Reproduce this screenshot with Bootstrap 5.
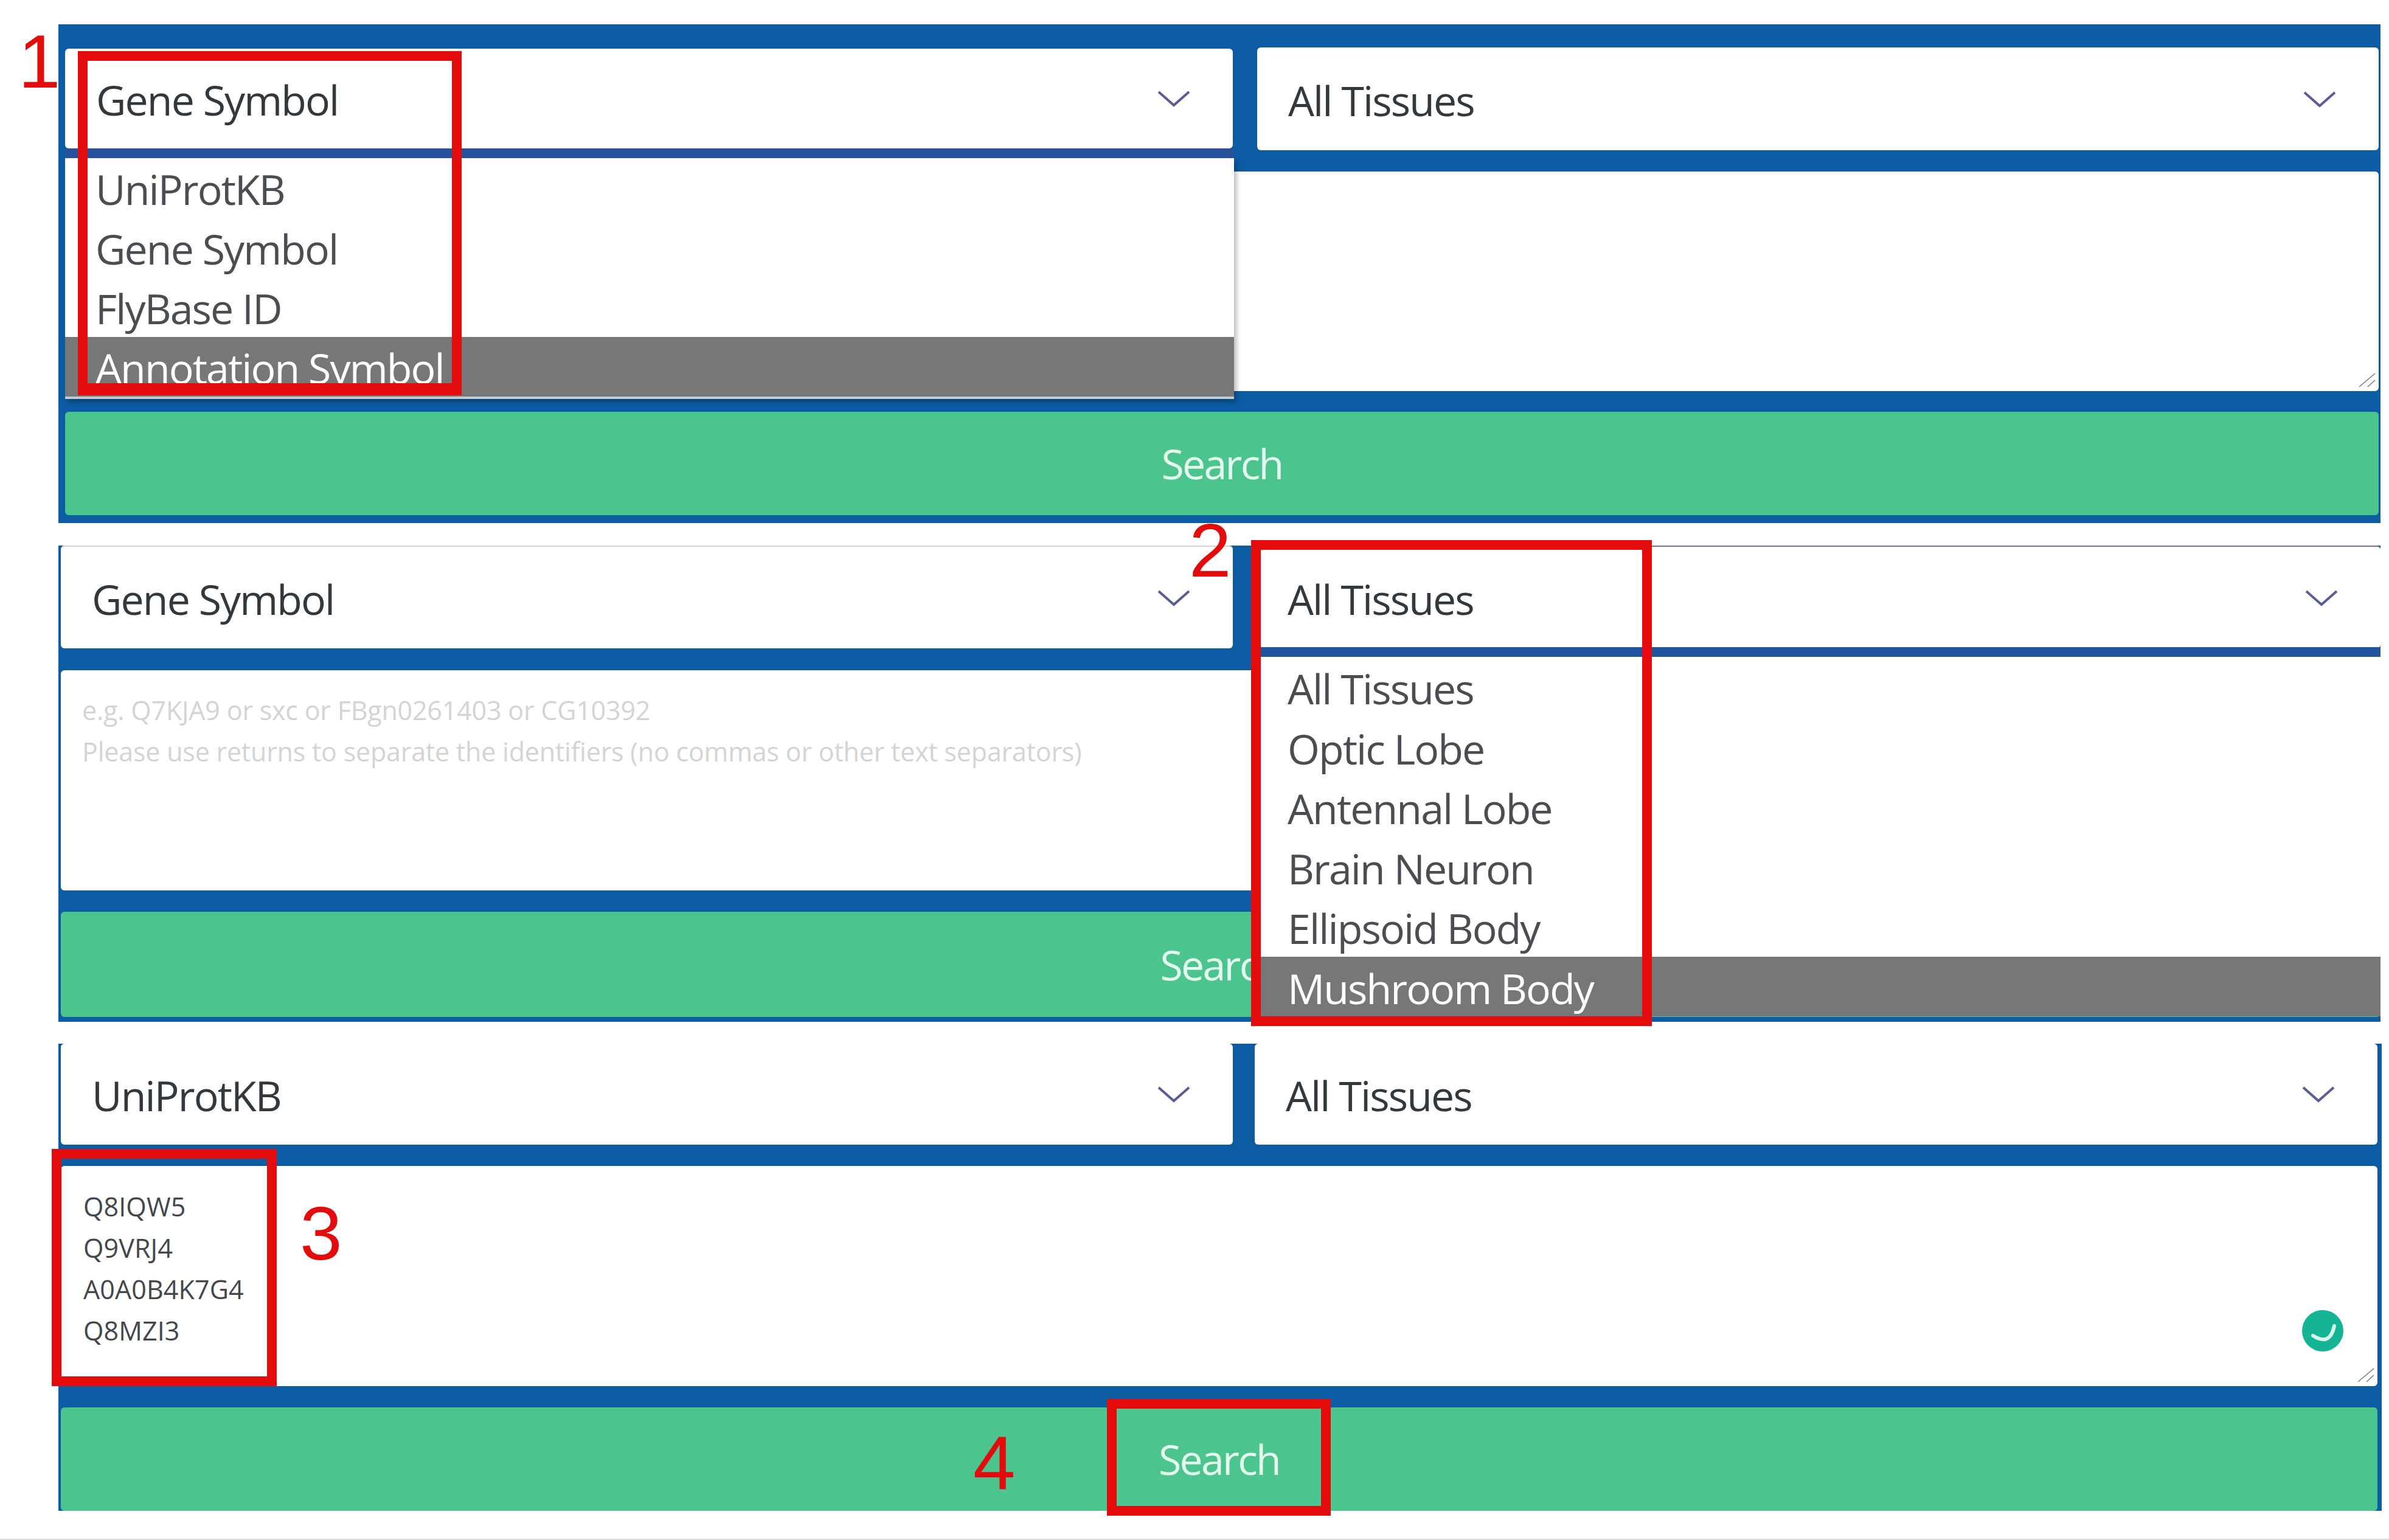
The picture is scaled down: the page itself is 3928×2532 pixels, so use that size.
<!DOCTYPE html>
<html lang="en">
<head>
  <meta charset="UTF-8" />
  <meta name="viewport" content="width=device-width, initial-scale=1.0"/>
  <title>Search steps</title>
  <link href="https://cdn.jsdelivr.net/npm/bootstrap@5.3.3/dist/css/bootstrap.min.css" rel="stylesheet" />
  <style>
    html, body { margin: 0; background: #fff; }
    .shot { position: relative; width: 3928px; height: 2532px; padding: 40px 12px 0 96px; border-bottom: 2px solid #dcdcdc; overflow: hidden; font-family: "Open Sans", "Liberation Sans", sans-serif; }

    .blue-panel { position: relative; background: #0b5ca3; }
    .panel-one { padding: 38px 3px 13px 11px; margin-bottom: 37px; width: 3818px; }
    .panel-two { padding: 0 0 8px 4px; margin-bottom: 36px; width: 3818px; }
    .panel-three { padding: 0 7px 0 4px; width: 3820px; }

    .select-row { gap: 40px; margin-bottom: 35px; }
    .panel-two .select-row { gap: 45px; margin-bottom: 36px; }
    .panel-three .select-row { gap: 36px; margin-bottom: 35px; }

    .blue-panel .form-select {
      height: 169px; padding: 4px 140px 0 51px; border: 0; border-radius: 6px;
      font-size: 68px; line-height: 1.4; color: #33383d; letter-spacing: -1.9px;
      background-color: #fff;
      background-image: url("data:image/svg+xml,%3csvg xmlns='http://www.w3.org/2000/svg' viewBox='0 0 54 28'%3e%3cpath fill='none' stroke='%235b5b98' stroke-width='4' d='M2 3l25 22L52 3'/%3e%3c/svg%3e");
      background-size: 54px 28px; background-position: right 70px center;
    }
    .blue-panel .left-select { flex: 0 0 1920px; width: 1920px; }
    .panel-one .left-select { height: 164px; margin-top: 2px; }
    .panel-two .left-select, .panel-three .left-select { flex-basis: 1927px; width: 1927px; }
    .panel-two .left-select { border-top: 2px solid #d4d4d4; }
    .panel-two .right-select { border-top: 2px solid #6f7590; padding-left: 45px; }
    .panel-three .form-select { height: 166px; }

    .blue-panel .form-control {
      height: 362px; padding: 32px 35px; border: 0; border-radius: 6px; resize: none;
      font-size: 43px; line-height: 68px; color: #43474b; letter-spacing: -.2px;
    }
    .panel-one .form-control { height: 361px; }
    .panel-three .form-control { padding: 33px 37px; letter-spacing: .1px; }
    .blue-panel .form-control::placeholder { color: #d2d4d6; opacity: 1; letter-spacing: -.2px; }
    .area-wrap { position: relative; margin-bottom: 34px; }
    .panel-two .area-wrap, .panel-three .area-wrap { margin-bottom: 35px; }

    .grip { position: absolute; right: 5px; bottom: 6px; width: 28px; height: 24px; }
    .smile-badge { position: absolute; right: 56px; bottom: 57px; width: 68px; height: 68px; }

    .search-btn {
      display: block; width: 100%; height: 170px; border: 0; border-radius: 6px;
      background: #4bc48e; color: #e4fbef; font-size: 68px; letter-spacing: -2.7px;
    }
    .panel-two .search-btn { height: 173px; }
    .search-btn:hover { background: #4bc48e; color: #e4fbef; }

    .blue-panel .option-menu {
      display: block; position: absolute; margin: 0; padding: 0; border: 0; border-radius: 0;
      background: #fff; font-size: 68px; z-index: 2;
    }
    .option-menu .dropdown-item { height: 98px; line-height: 102px; padding: 0 0 0 50px; color: #4a4e52; letter-spacing: -1.9px; }
    .option-menu .dropdown-item.is-hover { background: #777; color: #fff; }
    .blue-panel .menu-one { top: 220px; left: 11px; width: 1922px; box-shadow: 0 -16px 0 #28519b, 4px 5px 8px rgba(0,0,0,.28); border-bottom: 4px solid #c2cad2; }
    .menu-two { top: 183px; left: 1976px; right: 0; box-shadow: 0 -16px 0 #22529e; }
    .menu-two .dropdown-item { height: 98.5px; line-height: 104px; padding-left: 45px; }

    .red-box { position: absolute; border: 16px solid #e30b0b; z-index: 3; }
    .box-one { left: 128px; top: 84px; width: 631px; height: 566px; border-bottom-width: 20px; }
    .box-two { left: 2057px; top: 888px; width: 659px; height: 799px; }
    .box-three { left: 85px; top: 1889px; width: 370px; height: 390px; }
    .box-four { left: 1820px; top: 2300px; width: 368px; height: 192px; }

    .step-no { position: absolute; font-family: "Liberation Sans", Arial, sans-serif; font-size: 125px; line-height: 1; color: #e30b0b; z-index: 4; }
    .no-one { left: 30px; top: 38px; }
    .no-two { left: 1955px; top: 842px; }
    .no-three { left: 493px; top: 1965px; }
    .no-four { left: 1600px; top: 2342px; }
  </style>
</head>
<body>
  <main class="shot">

    <!-- First form: id type list open -->
    <section class="blue-panel panel-one">
      <div class="d-flex select-row">
        <select class="form-select left-select"><option>Gene Symbol</option></select>
        <select class="form-select right-select flex-grow-1"><option>All Tissues</option></select>
      </div>
      <div class="area-wrap">
        <textarea class="form-control"></textarea>
        <svg class="grip" viewBox="0 0 28 24"><path d="M1 23L27 1M15 23L27 12" stroke="#777" stroke-width="1.5" fill="none"/></svg>
      </div>
      <button class="btn search-btn" type="button">Search</button>
      <div class="dropdown-menu show option-menu menu-one">
        <a class="dropdown-item" href="#">UniProtKB</a>
        <a class="dropdown-item" href="#">Gene Symbol</a>
        <a class="dropdown-item" href="#">FlyBase ID</a>
        <a class="dropdown-item is-hover" href="#">Annotation Symbol</a>
      </div>
    </section>

    <!-- Second form: tissue list open -->
    <section class="blue-panel panel-two">
      <div class="d-flex select-row">
        <select class="form-select left-select"><option>Gene Symbol</option></select>
        <select class="form-select right-select flex-grow-1"><option>All Tissues</option></select>
      </div>
      <div class="area-wrap">
        <textarea class="form-control" placeholder="e.g. Q7KJA9 or sxc or FBgn0261403 or CG10392&#10;Please use returns to separate the identifiers (no commas or other text separators)"></textarea>
      </div>
      <button class="btn search-btn" type="button">Search</button>
      <div class="dropdown-menu show option-menu menu-two">
        <a class="dropdown-item" href="#">All Tissues</a>
        <a class="dropdown-item" href="#">Optic Lobe</a>
        <a class="dropdown-item" href="#">Antennal Lobe</a>
        <a class="dropdown-item" href="#">Brain Neuron</a>
        <a class="dropdown-item" href="#">Ellipsoid Body</a>
        <a class="dropdown-item is-hover" href="#">Mushroom Body</a>
      </div>
    </section>

    <!-- Third form: filled in -->
    <section class="blue-panel panel-three">
      <div class="d-flex select-row">
        <select class="form-select left-select"><option>UniProtKB</option></select>
        <select class="form-select right-select flex-grow-1"><option>All Tissues</option></select>
      </div>
      <div class="area-wrap">
        <textarea class="form-control">Q8IQW5
Q9VRJ4
A0A0B4K7G4
Q8MZI3</textarea>
        <svg class="smile-badge" viewBox="0 0 68 68">
          <circle cx="34" cy="34" r="34" fill="#15b494"/>
          <path d="M18 42Q46 60 53 26" fill="none" stroke="#d8f8ea" stroke-width="6" stroke-linecap="round"/>
        </svg>
        <svg class="grip" viewBox="0 0 28 24"><path d="M1 23L27 1M15 23L27 12" stroke="#777" stroke-width="1.5" fill="none"/></svg>
      </div>
      <button class="btn search-btn" type="button">Search</button>
    </section>

    <!-- Annotations -->
    <div class="red-box box-one"></div>
    <div class="red-box box-two"></div>
    <div class="red-box box-three"></div>
    <div class="red-box box-four"></div>
    <span class="step-no no-one">1</span>
    <span class="step-no no-two">2</span>
    <span class="step-no no-three">3</span>
    <span class="step-no no-four">4</span>
  </main>

  <script src="https://cdn.jsdelivr.net/npm/bootstrap@5.3.3/dist/js/bootstrap.bundle.min.js"></script>
</body>
</html>
